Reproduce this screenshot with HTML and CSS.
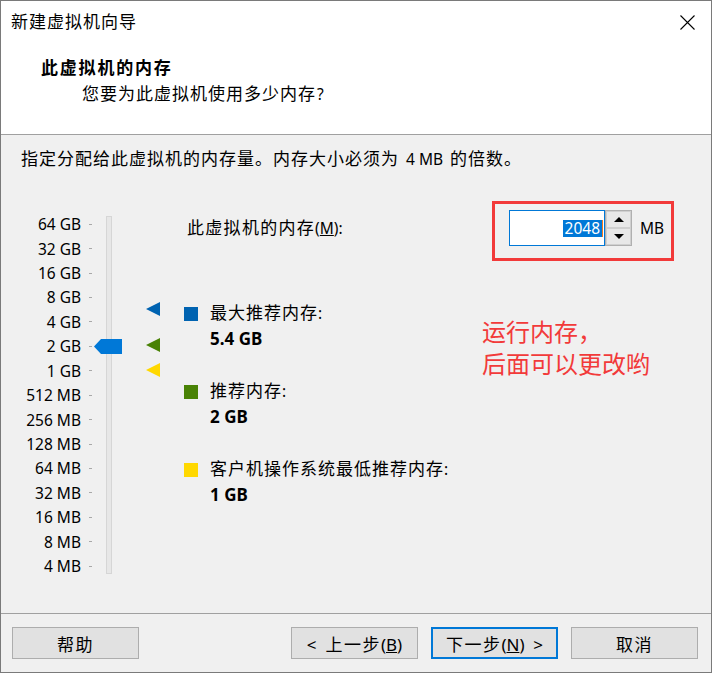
FILE: index.html
```html
<!DOCTYPE html>
<html lang="zh-CN">
<head>
<meta charset="utf-8">
<title>新建虚拟机向导</title>
<link rel="stylesheet" href="styles.css">
</head>
<body>
<div class="window">
  <div class="header">
    <div class="titlebar">
      <span class="title">新建虚拟机向导</span>
      <svg class="close" width="15" height="15" viewBox="0 0 15 15"><path d="M0.5 0.5 L14.5 14.5 M14.5 0.5 L0.5 14.5" stroke="#000" stroke-width="1.1" fill="none"/></svg>
    </div>
    <div class="h-title">此虚拟机的内存</div>
    <div class="h-sub">您要为此虚拟机使用多少内存<span class="en">?</span></div>
  </div>
  <div class="content">
    <div class="desc">指定分配给此虚拟机的内存量。内存大小必须为<span class="en"> 4 MB </span>的倍数。</div>
    <div class="main">
      <div class="slider">
        <div class="track"></div>
        <div class="row"><span class="lbl">64 GB</span><span class="tick"></span></div>
        <div class="row"><span class="lbl">32 GB</span><span class="tick"></span></div>
        <div class="row"><span class="lbl">16 GB</span><span class="tick"></span></div>
        <div class="row"><span class="lbl">8 GB</span><span class="tick"></span></div>
        <div class="row"><span class="lbl">4 GB</span><span class="tick"></span></div>
        <div class="row"><span class="lbl">2 GB</span><span class="tick"></span></div>
        <div class="row"><span class="lbl">1 GB</span><span class="tick"></span></div>
        <div class="row"><span class="lbl">512 MB</span><span class="tick"></span></div>
        <div class="row"><span class="lbl">256 MB</span><span class="tick"></span></div>
        <div class="row"><span class="lbl">128 MB</span><span class="tick"></span></div>
        <div class="row"><span class="lbl">64 MB</span><span class="tick"></span></div>
        <div class="row"><span class="lbl">32 MB</span><span class="tick"></span></div>
        <div class="row"><span class="lbl">16 MB</span><span class="tick"></span></div>
        <div class="row"><span class="lbl">8 MB</span><span class="tick"></span></div>
        <div class="row"><span class="lbl">4 MB</span><span class="tick"></span></div>
        <svg class="thumb" width="28" height="15" viewBox="0 0 28 15"><path d="M0 7.5 L7 0 H28 V15 H7 Z" fill="#0078d7"/></svg>
        <svg class="mark mark-max" width="14" height="14" viewBox="0 0 14 14"><path d="M0 7 L14 0 V14 Z" fill="#0063b1"/></svg>
        <svg class="mark mark-rec" width="14" height="14" viewBox="0 0 14 14"><path d="M0 7 L14 0 V14 Z" fill="#498205"/></svg>
        <svg class="mark mark-min" width="14" height="14" viewBox="0 0 14 14"><path d="M0 7 L14 0 V14 Z" fill="#ffd800"/></svg>
      </div>
      <div class="panel">
        <div class="mem-row">
          <div class="mem-label">此虚拟机的内存<span class="en">(<u>M</u>):</span></div>
          <div class="redbox">
            <div class="input"><span class="sel">2048</span></div>
            <div class="spin">
              <div class="spin-btn"><span class="arr-up"></span></div>
              <div class="spin-btn"><span class="arr-down"></span></div>
            </div>
            <span class="unit">MB</span>
          </div>
        </div>
        <div class="lower">
          <div class="legend">
            <div class="item">
              <span class="sq sq-max"></span>
              <div class="itxt"><div>最大推荐内存<span class="en">:</span></div><div class="val">5.4 GB</div></div>
            </div>
            <div class="item">
              <span class="sq sq-rec"></span>
              <div class="itxt"><div>推荐内存<span class="en">:</span></div><div class="val">2 GB</div></div>
            </div>
            <div class="item">
              <span class="sq sq-min"></span>
              <div class="itxt"><div>客户机操作系统最低推荐内存<span class="en">:</span></div><div class="val">1 GB</div></div>
            </div>
          </div>
          <div class="note">运行内存，<br>后面可以更改哟</div>
        </div>
      </div>
    </div>
  </div>
  <div class="footer">
    <button class="btn">帮助</button>
    <button class="btn btn-back"><span class="en">&lt;&nbsp; </span>上一步<span class="en">(<u>B</u>)</span></button>
    <button class="btn btn-next">下一步<span class="en">(<u>N</u>)&nbsp; &gt;</span></button>
    <button class="btn">取消</button>
  </div>
</div>
</body>
</html>
```
FILE: styles.css
```css
* { box-sizing: border-box; }
body {
  margin: 0;
  font-family: "Noto Sans", "Noto Sans CJK SC", sans-serif;
  color: #000;
}
.window {
  width: 712px;
  height: 673px;
  border: 1px solid #7a7a7a;
  display: flex;
  flex-direction: column;
  background: #f0f0f0;
}
.en { letter-spacing: 0; font-size: 15.5px; }

.header {
  height: 134px;
  background: #fff;
  border-bottom: 1px solid #a0a0a0;
  flex: none;
}
.titlebar {
  display: flex;
  align-items: center;
  justify-content: space-between;
  height: 22px;
  margin-top: 10px;
  padding-left: 10px;
  padding-right: 16px;
}
.title {
  font-size: 17px;
  letter-spacing: 1px;
  line-height: 22px;
}
.close { display: block; }
.h-title {
  margin-top: 23px;
  padding-left: 40px;
  font-size: 17px;
  font-weight: 700;
  letter-spacing: 1.8px;
  line-height: 24px;
}
.h-sub {
  margin-top: 3px;
  padding-left: 81px;
  font-size: 17px;
  letter-spacing: 1px;
  line-height: 22px;
}
.h-sub .en { padding-left: 1px; }

.content {
  flex: 1;
  display: flex;
  flex-direction: column;
}
.desc {
  margin-top: 14px;
  padding-left: 20px;
  font-size: 17px;
  letter-spacing: 1px;
  line-height: 20px;
}
.desc .en { padding: 0 3px; }
.main {
  display: flex;
  margin-top: 31px;
}
.slider {
  position: relative;
  width: 183px;
  flex: none;
  padding-top: 12px;
}
.row {
  display: flex;
  align-items: center;
  height: 24.43px;
}
.lbl {
  width: 80px;
  text-align: right;
  font-size: 15.5px;
  line-height: 20px;
}
.tick {
  width: 3px;
  height: 1px;
  margin-left: 8px;
  background: #a8a8a8;
}
.track {
  position: absolute;
  left: 105px;
  top: 16px;
  width: 6px;
  height: 358px;
  background: #e7e7e7;
  border: 1px solid #d6d6d6;
}
.thumb { position: absolute; left: 93px; top: 139px; }
.mark { position: absolute; left: 145px; }
.mark-max { top: 102px; }
.mark-rec { top: 138px; }
.mark-min { top: 163px; }

.panel {
  flex: 1;
  display: flex;
  flex-direction: column;
}
.mem-row {
  display: flex;
  height: 62px;
}
.mem-label {
  width: 308px;
  padding-left: 3px;
  padding-top: 17px;
  font-size: 17px;
  letter-spacing: 1.3px;
  line-height: 22px;
}
.redbox {
  margin-top: 1px;
  width: 182px;
  height: 60px;
  border: 3px solid #f23a3a;
  display: flex;
  align-items: flex-start;
  padding-top: 6px;
  padding-left: 14px;
}
.input {
  width: 96px;
  height: 36px;
  border: 1px solid #0078d7;
  background: #fff;
  display: flex;
  align-items: center;
  justify-content: flex-end;
  padding-right: 1px;
}
.sel {
  background: #0078d7;
  color: #fff;
  font-size: 15.5px;
  line-height: 17px;
  padding: 0 2px;
  border-right: 1px solid #f07a20;
}
.spin {
  width: 27px;
  height: 36px;
  display: flex;
  flex-direction: column;
  border: 1px solid #b0b0b0;
  background: #e8e8e8;
}
.spin-btn {
  flex: 1;
  display: flex;
  align-items: center;
  justify-content: center;
  border: 1px solid #d0d0d0;
}
.arr-up, .arr-down {
  width: 0;
  height: 0;
  border-left: 5px solid transparent;
  border-right: 5px solid transparent;
}
.arr-up { border-bottom: 5px solid #000; }
.arr-down { border-top: 5px solid #000; }
.unit {
  margin-left: 8px;
  font-size: 15.5px;
  line-height: 36px;
}

.lower { display: flex; }
.legend {
  width: 298px;
  padding-top: 38px;
  display: flex;
  flex-direction: column;
  gap: 27px;
}
.item { display: flex; align-items: flex-start; }
.sq {
  width: 14px;
  height: 14px;
  margin-top: 7px;
  flex: none;
}
.sq-max { background: #0063b1; }
.sq-rec { background: #498205; }
.sq-min { background: #ffd800; }
.itxt {
  margin-left: 12px;
  font-size: 17px;
  letter-spacing: 1px;
  line-height: 25px;
}
.val { font-weight: 700; font-size: 17px; letter-spacing: 0; }
.note {
  margin-top: 54px;
  font-size: 24px;
  line-height: 32px;
  color: #f23a3a;
}

.footer {
  flex: none;
  display: flex;
  gap: 13px;
  border-top: 1px solid #a0a0a0;
  padding: 13px 13px 13px 11px;
}
.btn {
  width: 127px;
  height: 32px;
  background: #e1e1e1;
  border: 1px solid #adadad;
  font-family: "Noto Sans", "Noto Sans CJK SC", sans-serif;
  font-size: 17px;
  letter-spacing: 1.5px;
  color: #000;
  padding: 0;
}
.btn .en { font-size: 17px; }
.btn-back { margin-left: auto; }
.btn-next { border: 2px solid #0078d7; }
```
